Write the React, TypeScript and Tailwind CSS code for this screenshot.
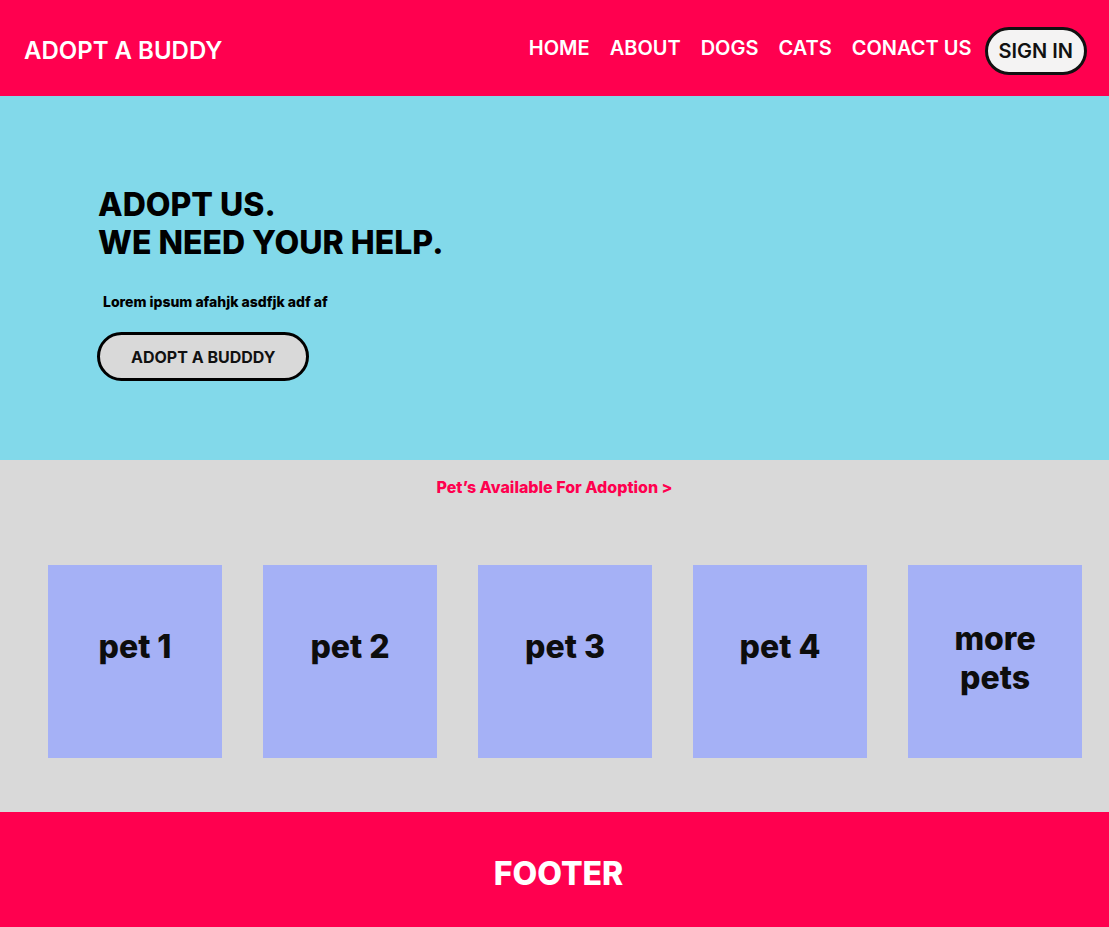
import React from "react";

const navLinks = ["HOME", "ABOUT", "DOGS", "CATS", "CONACT US"];

const pets = [
  { id: 1, label: "pet 1" },
  { id: 2, label: "pet 2" },
  { id: 3, label: "pet 3" },
  { id: 4, label: "pet 4" },
  { id: 5, label: "more pets" },
];

export default function App() {
  return (
    <div className="min-h-screen font-['Inter',sans-serif]">
      {/* Header */}
      <header className="flex h-24 items-center justify-between bg-[#FF004F] pl-6 pr-[22px]">
        <h1 className="mt-[6px] text-[24px] font-semibold text-white">
          ADOPT A BUDDY
        </h1>
        <nav className="mt-[6px] flex items-center gap-[13px]">
          <ul className="mb-[7px] flex items-center gap-5">
            {navLinks.map((link) => (
              <li key={link}>
                <a href="#" className="text-[20px] font-semibold text-white">
                  {link}
                </a>
              </li>
            ))}
          </ul>
          <button className="h-12 rounded-full border-[3px] border-[#111] bg-[#F4F3F3] px-[11px] text-[20px] font-semibold text-[#111]">
            SIGN IN
          </button>
        </nav>
      </header>

      {/* Hero */}
      <section className="h-[364px] bg-[#82D9EA] pl-[98px] pt-[90px]">
        <h2 className="text-[32px] font-extrabold leading-[38px] text-black">
          ADOPT US.
          <br />
          WE NEED YOUR HELP.
        </h2>
        <p className="ml-[5px] mt-[32px] text-[14px] font-extrabold leading-4 text-black">
          Lorem ipsum afahjk asdfjk adf af
        </p>
        <button className="-ml-px mt-[22px] h-[49px] rounded-full border-[3px] border-black bg-[#D9D9D9] px-[31px] text-[16px] font-bold text-[#111]">
          ADOPT A BUDDDY
        </button>
      </section>

      {/* Pets */}
      <section className="bg-[#D9D9D9] pb-[54px] pt-[18px]">
        <a
          href="#"
          className="block text-center text-[16px] font-extrabold leading-[18px] text-[#FF004F]"
        >
          Pet’s Available For Adoption &gt;
        </a>
        <div className="mt-[69px] flex gap-[41px] pl-12">
          {pets.map((pet) => (
            <div
              key={pet.id}
              className={
                pet.id === 5
                  ? "flex h-[193px] w-[174px] items-center justify-center bg-[#A5B1F6] px-6 pb-2"
                  : "flex h-[193px] w-[174px] items-center justify-center bg-[#A5B1F6] px-6 pb-[30px]"
              }
            >
              <span className="text-center text-[32px] font-extrabold leading-[39px] text-[#0D0D0D]">
                {pet.label}
              </span>
            </div>
          ))}
        </div>
      </section>

      {/* Footer */}
      <footer className="flex h-[124px] items-center justify-center bg-[#FF004F] pl-2">
        <h2 className="text-[32px] font-extrabold text-white">FOOTER</h2>
      </footer>
    </div>
  );
}
